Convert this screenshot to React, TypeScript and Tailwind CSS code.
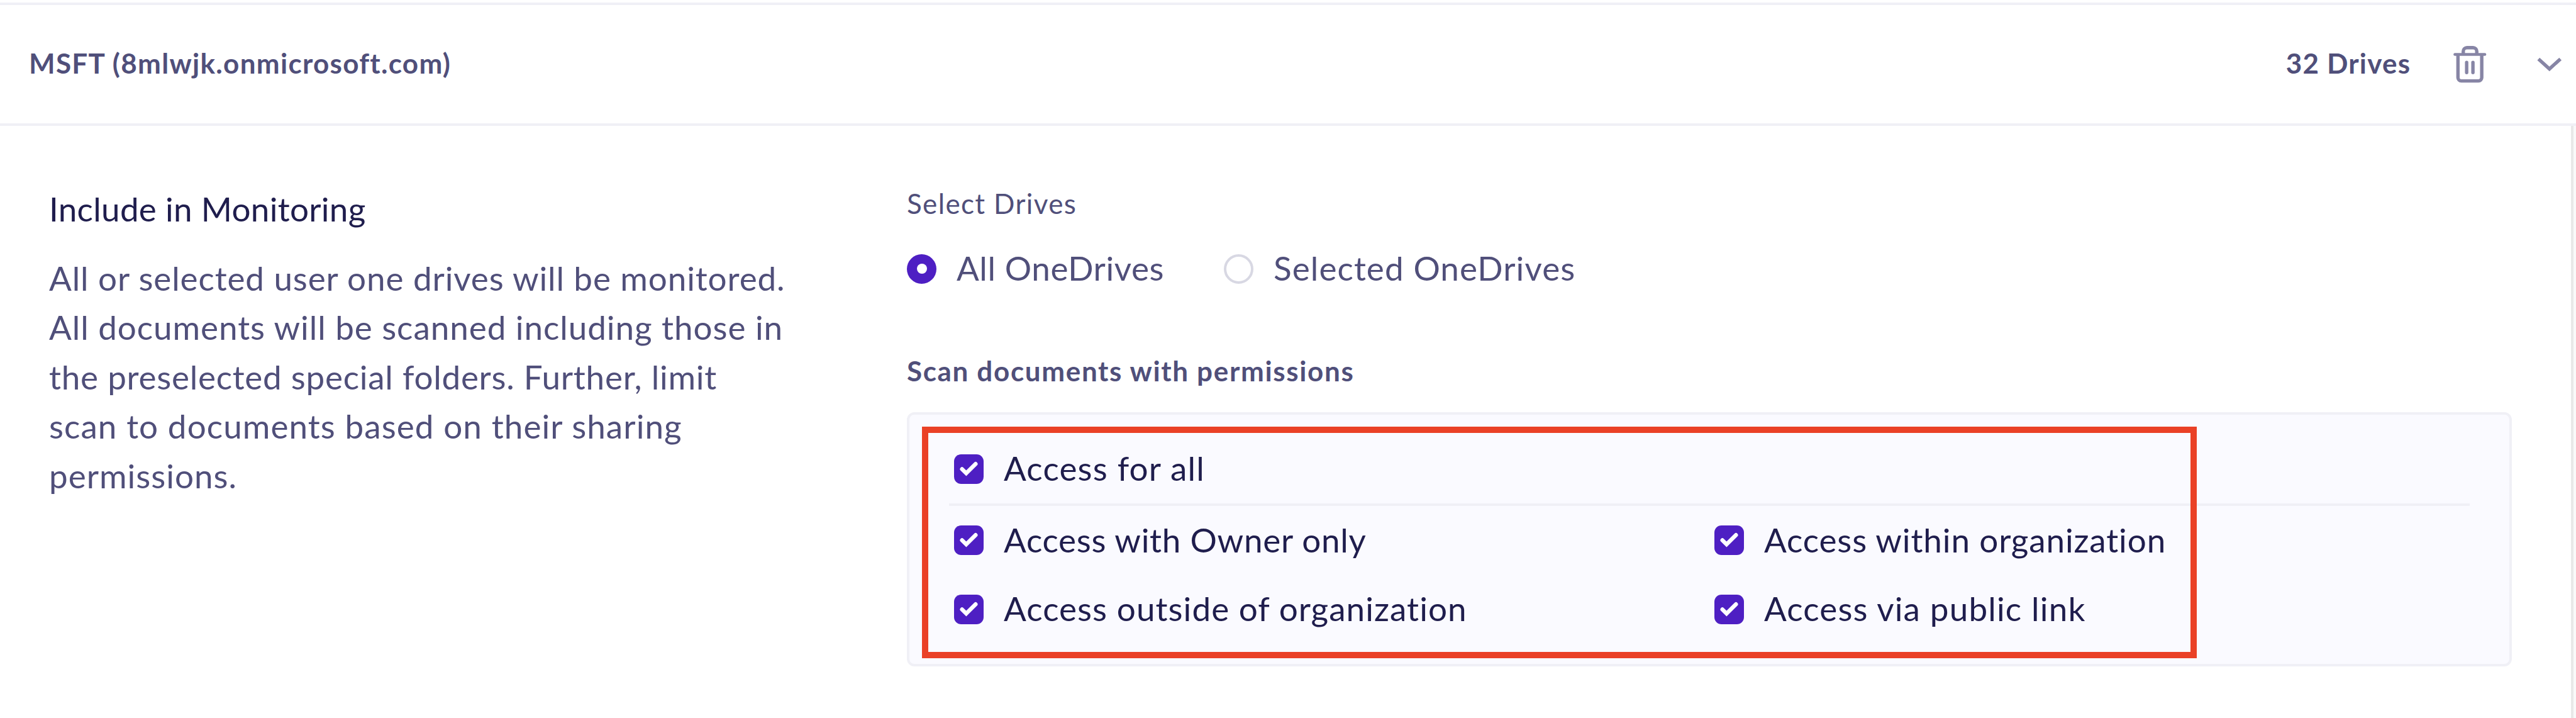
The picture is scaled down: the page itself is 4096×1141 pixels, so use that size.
function TrashIcon() {
  return (
    <svg viewBox="0 0 80 80" className="h-[78.4px] w-[78.4px] shrink-0" fill="none" stroke="#8785a5" strokeWidth="5.5">
      <path d="M13.8 24H62.2" strokeWidth="4.8" strokeLinecap="round" />
      <path d="M18.7 24V61.5a5.5 5.5 0 0 0 5.5 5.5H51.8a5.5 5.5 0 0 0 5.5-5.5V24" />
      <path d="M27.3 24V19a6 6 0 0 1 6-6h9.9a6 6 0 0 1 6 6V24" />
      <path d="M32.8 37V53.3M43 37V53.3" strokeLinecap="round" />
    </svg>
  );
}

function ChevronIcon() {
  return (
    <svg viewBox="0 0 80 48" className="h-[47px] w-[78.4px] shrink-0" fill="none" stroke="#8785a5" strokeWidth="5.6">
      <path d="M18.7 15L36.5 31.2L54.3 15" />
    </svg>
  );
}

function Checkbox({ label, spacing }: { label: string; spacing: string }) {
  return (
    <label className="flex items-center gap-8 text-[53px] leading-[80px] text-[#1f1d4d]">
      <svg viewBox="0 0 48 48" className="size-[47px] shrink-0" fill="none">
        <rect width="48" height="48" rx="11.5" fill="#4e1fc3" />
        <path d="M13 24L19.8 30.6L35 15.6" stroke="#fff" strokeWidth="6.6" strokeLinecap="round" strokeLinejoin="miter" />
      </svg>
      <span className={`whitespace-nowrap pb-0.5 ${spacing}`}>{label}</span>
    </label>
  );
}

function Radio({ label, checked, spacing }: { label: string; checked?: boolean; spacing: string }) {
  return (
    <label className="flex items-center gap-8">
      {checked ? (
        <span className="flex size-[47px] shrink-0 items-center justify-center rounded-full bg-[#4e1fc3]">
          <span className="size-4 rounded-full bg-white" />
        </span>
      ) : (
        <span className="size-[47px] shrink-0 rounded-full border-4 border-[#d8d8e3] bg-white" />
      )}
      <span className={`whitespace-nowrap pb-0.5 ${spacing}`}>{label}</span>
    </label>
  );
}

export default function App() {
  return (
    <div className="flex h-[1141px] w-[4096px] flex-col overflow-hidden bg-white pt-1 font-['Lato',sans-serif] text-[#504f7a]">
      <header className="flex h-[196px] shrink-0 items-center border-y-4 border-[#f0f0f6] pl-[46px] text-[44px] leading-[60px] font-bold">
        <span className="pb-1 tracking-[1.3px]">MSFT (8mlwjk.onmicrosoft.com)</span>
        <span className="mr-[57px] ml-auto pb-1 tracking-[1.2px]">32 Drives</span>
        <TrashIcon />
        <span className="w-[49px]" />
        <ChevronIcon />
      </header>

      <div className="flex min-h-0 flex-1">
        <main className="flex flex-1">
          <section className="w-[1442px] shrink-0 pt-[92px] pl-[78px] text-[53px]">
            <h2 className="leading-[80px] tracking-[0.3px] text-[#1f1d4d]">Include in Monitoring</h2>
            <p className="mt-[31px] leading-[78.4px] whitespace-nowrap">
              <span className="block tracking-[0.9px]">All or selected user one drives will be monitored.</span>
              <span className="block tracking-[0.95px]">All documents will be scanned including those in</span>
              <span className="block tracking-[0.75px]">the preselected special folders. Further, limit</span>
              <span className="block tracking-[1.08px]">scan to documents based on their sharing</span>
              <span className="block tracking-[1px]">permissions.</span>
            </p>
          </section>

          <section className="w-[2552px] shrink-0 pt-[93px]">
            <h3 className="text-[44px] leading-[60px] tracking-[1.35px]">Select Drives</h3>
            <div className="mt-[31px] grid h-[86px] grid-cols-[504px_1fr] items-center text-[53px] leading-[80px]">
              <Radio label="All OneDrives" checked spacing="tracking-[0.6px]" />
              <Radio label="Selected OneDrives" spacing="tracking-[1.1px]" />
            </div>
            <h3 className="mt-[89px] text-[44px] leading-[60px] font-bold tracking-[1.65px]">Scan documents with permissions</h3>

            <div className="relative mt-9 h-[404px] rounded-[12px] border-4 border-[#f0f0f6] bg-[#fafaff] px-[63px]">
              <div className="flex h-[145px] items-center border-b-4 border-[#f0f0f6] pt-[31px] pl-2">
                <Checkbox label="Access for all" spacing="tracking-[1.2px]" />
              </div>
              <div className="grid grid-cols-[1209px_1fr] grid-rows-[109px_110px] items-center pl-2">
                <Checkbox label="Access with Owner only" spacing="tracking-[0.73px]" />
                <Checkbox label="Access within organization" spacing="tracking-[0.88px]" />
                <Checkbox label="Access outside of organization" spacing="tracking-[1.07px]" />
                <Checkbox label="Access via public link" spacing="tracking-[1.17px]" />
              </div>
              <div className="pointer-events-none absolute top-[19px] left-[19.5px] h-[368px] w-[2027px] border-[10px] border-[#ea4126]" />
            </div>
          </section>
        </main>
        <div className="w-2 border-l-4 border-[#e8e8e8] bg-[#f9f9f9]" />
      </div>
    </div>
  );
}
